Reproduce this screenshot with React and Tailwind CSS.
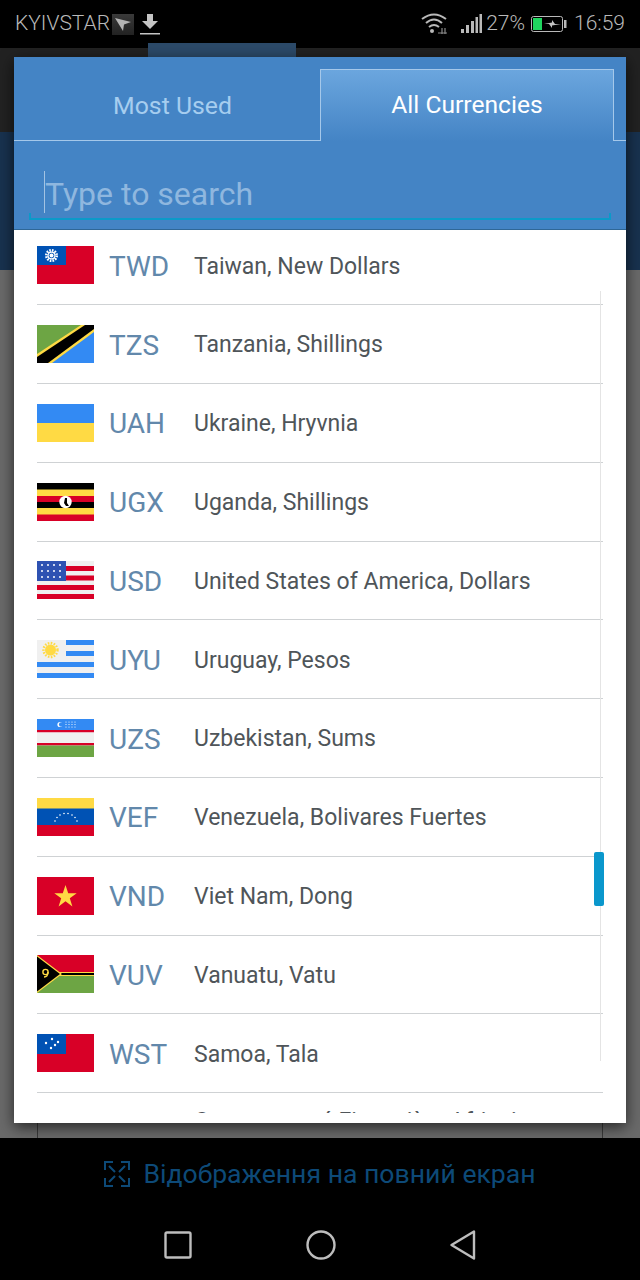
import React from 'react';

const RED = '#d80027';
const NAVY = '#0052b4';
const SKY = '#338af3';
const GOLD = '#ffda44';
const GREEN = '#6da544';
const PALE = '#f0f0f0';

const Stars = ({ points, r = 1, fill = '#fff' }) =>
  points.map(([x, y], i) => <circle key={i} cx={x} cy={y} r={r} fill={fill} />);

const flags = {
  TWD: (
    <>
      <rect width="57" height="38" fill={RED} />
      <rect width="29" height="19" fill={NAVY} />
      <circle cx="14.5" cy="9.5" r="5.2" fill="none" stroke="#fff" strokeWidth="2.6" strokeDasharray="1.6 1.1" />
      <circle cx="14.5" cy="9.5" r="4" fill="#fff" />
      <circle cx="14.5" cy="9.5" r="2.8" fill={NAVY} />
      <circle cx="14.5" cy="9.5" r="2" fill="#fff" />
    </>
  ),
  TZS: (
    <>
      <rect width="57" height="38" fill={SKY} />
      <polygon points="0,0 57,0 0,38" fill={GREEN} />
      <polygon points="44,0 57,0 57,7 15,38 0,38 0,29" fill={GOLD} />
      <polygon points="48,0 57,0 57,4 11,38 0,38 0,32" fill="#000" />
    </>
  ),
  UAH: (
    <>
      <rect width="57" height="19" fill={SKY} />
      <rect y="19" width="57" height="19" fill={GOLD} />
    </>
  ),
  UGX: (
    <>
      <rect width="57" height="38" fill={GOLD} />
      <rect width="57" height="6.5" fill="#000" />
      <rect y="13" width="57" height="6" fill={RED} />
      <rect y="19" width="57" height="6" fill="#000" />
      <rect y="31.5" width="57" height="6.5" fill={RED} />
      <circle cx="28.5" cy="19" r="6.2" fill="#fff" />
      <path d="M28 15 L30 15 L30 20 L32 23 L29 23 L27 20 Z" fill="#000" />
    </>
  ),
  USD: (
    <>
      <rect width="57" height="38" fill={PALE} />
      <rect y="5" width="57" height="5" fill={RED} />
      <rect y="14.5" width="57" height="5" fill={RED} />
      <rect y="24" width="57" height="5" fill={RED} />
      <rect y="33" width="57" height="5" fill={RED} />
      <rect width="29" height="20" fill="#2e52b2" />
      <Stars
        points={[4, 10, 16, 22].flatMap((x) => [
          [x + 1, 4],
          [x + 1, 10],
          [x + 1, 16],
        ])}
      />
    </>
  ),
  UYU: (
    <>
      <rect width="57" height="38" fill={PALE} />
      <rect x="29" width="28" height="5" fill={SKY} />
      <rect x="29" y="11" width="28" height="5" fill={SKY} />
      <rect y="22" width="57" height="5" fill={SKY} />
      <rect y="33" width="57" height="5" fill={SKY} />
      <circle cx="13.5" cy="10" r="5.5" fill={GOLD} />
      <circle cx="13.5" cy="10" r="7" fill="none" stroke={GOLD} strokeWidth="2.4" strokeDasharray="1.6 1.4" />
    </>
  ),
  UZS: (
    <>
      <rect width="57" height="12" fill={SKY} />
      <rect y="11" width="57" height="2.5" fill={RED} />
      <rect y="13.5" width="57" height="11" fill={PALE} />
      <rect y="24" width="57" height="2.5" fill={RED} />
      <rect y="26.5" width="57" height="11.5" fill={GREEN} />
      <circle cx="23" cy="5.5" r="2.6" fill="#fff" />
      <circle cx="24.2" cy="5.5" r="2.3" fill={SKY} />
      <Stars
        points={[29, 32, 35, 38].flatMap((x) => [
          [x, 3],
          [x, 5.5],
          [x, 8],
        ])}
        r={0.6}
      />
    </>
  ),
  VEF: (
    <>
      <rect width="57" height="11" fill={GOLD} />
      <rect y="10.5" width="57" height="17" fill={NAVY} />
      <rect y="27" width="57" height="11" fill={RED} />
      <Stars
        points={[
          [18, 23],
          [20, 19.5],
          [23, 17],
          [27, 15.5],
          [31, 15.5],
          [35, 17],
          [38, 19.5],
          [40, 23],
        ]}
        r={0.8}
      />
    </>
  ),
  VND: (
    <>
      <rect width="57" height="38" fill={RED} />
      <polygon
        points="28.5,8 31.2,16.2 39.7,16.2 32.8,21.2 35.4,29.4 28.5,24.3 21.6,29.4 24.2,21.2 17.3,16.2 25.8,16.2"
        fill={GOLD}
      />
    </>
  ),
  VUV: (
    <>
      <rect width="57" height="18" fill={RED} />
      <rect y="18" width="57" height="20" fill={GREEN} />
      <rect x="20" y="17" width="37" height="4" fill={GOLD} />
      <rect x="20" y="18" width="37" height="2" fill="#000" />
      <polygon points="0,0 25,19 0,38" fill={GOLD} />
      <polygon points="0,1.5 23,19 0,36.5" fill="#000" />
      <circle cx="8.5" cy="17" r="2.6" fill="none" stroke={GOLD} strokeWidth="1.4" />
      <path d="M11 17 Q11 22 7 22" fill="none" stroke={GOLD} strokeWidth="1.4" />
    </>
  ),
  WST: (
    <>
      <rect width="57" height="38" fill={RED} />
      <rect width="29" height="20" fill={NAVY} />
      <Stars
        points={[
          [15, 5],
          [9, 9],
          [21, 8],
          [18, 11],
          [14, 14],
        ]}
        r={1.2}
      />
    </>
  ),
  XAF: (
    <>
      <rect width="30" height="38" fill="#d6d9d4" />
      <rect x="30" width="27" height="38" fill="#f3ecc0" />
    </>
  ),
};

const currencies = [
  ['TWD', 'Taiwan, New Dollars'],
  ['TZS', 'Tanzania, Shillings'],
  ['UAH', 'Ukraine, Hryvnia'],
  ['UGX', 'Uganda, Shillings'],
  ['USD', 'United States of America, Dollars'],
  ['UYU', 'Uruguay, Pesos'],
  ['UZS', 'Uzbekistan, Sums'],
  ['VEF', 'Venezuela, Bolivares Fuertes'],
  ['VND', 'Viet Nam, Dong'],
  ['VUV', 'Vanuatu, Vatu'],
  ['WST', 'Samoa, Tala'],
];

const CurrencyRow = ({ code, name }) => (
  <div className="flex h-[78.8px] shrink-0 items-center border-b border-[#cfd2d4]">
    <svg width="57" height="38" viewBox="0 0 57 38" className="shrink-0">
      {flags[code]}
    </svg>
    <span className="ml-[15px] w-[85px] pt-[3px] text-[28px] text-[#6288ab]">{code}</span>
    <span className="pt-[3px] text-[23px] text-[#4f5559]">{name}</span>
  </div>
);

const StatusBar = () => (
  <div className="flex h-12 items-center justify-between bg-black px-[15px] text-[#b9b9b9]">
    <div className="flex items-center">
      <span className="text-[21px] font-light">KYIVSTAR</span>
      <div className="ml-[2px] flex h-[21px] w-[22px] items-center justify-center bg-gradient-to-b from-[#3a3a3a] to-[#222222]">
        <svg width="18" height="16" viewBox="0 0 18 16">
          <polygon points="1,2 17,6 10,8.5 9,15" fill="#b5b5b5" />
        </svg>
      </div>
      <svg width="20" height="22" viewBox="0 0 20 22" className="ml-[6px]">
        <path d="M7 1 H13 V8 H18 L10 16 L2 8 H7 Z M0 20 H20 V21.5 H0 Z" fill="#c4c4c4" />
      </svg>
    </div>
    <div className="flex items-center">
      <svg width="26" height="22" viewBox="0 0 26 22" className="-ml-[2px]">
        <path d="M1 6 Q13 -3 25 6 M5 10 Q13 3 21 10 M8 14 Q13 10 18 14" fill="none" stroke="#b9b9b9" strokeWidth="2" />
        <circle cx="11" cy="18" r="2" fill="#b9b9b9" />
        <path d="M17 20 H26 M21 15 V21 M24 15 V21" stroke="#8a8a8a" strokeWidth="1.2" />
      </svg>
      <svg width="21" height="20" viewBox="0 0 21 20" className="ml-[14px]">
        <rect x="0" y="15" width="3" height="4" fill="#b9b9b9" />
        <rect x="5" y="11" width="3" height="8" fill="#b9b9b9" />
        <rect x="10" y="7" width="3" height="12" fill="#b9b9b9" />
        <rect x="14.5" y="3" width="2.5" height="16" fill="#b9b9b9" />
        <rect x="18.5" y="0" width="2.5" height="19" fill="#b9b9b9" />
      </svg>
      <span className="ml-[4px] text-[21px] font-light">27%</span>
      <svg width="36" height="18" viewBox="0 0 36 18" className="ml-[6px]">
        <rect x="0.5" y="1.5" width="31" height="15" rx="2" fill="none" stroke="#b9b9b9" />
        <rect x="2" y="3" width="9" height="12" fill="#1fd65f" />
        <path d="M13 9 L21 7.5 L21 5 L24 9 L30 9 L21 10.5 L21 13 L18 9 Z" fill="#c4c4c4" />
        <rect x="33" y="5" width="2.5" height="8" fill="#b9b9b9" />
      </svg>
      <span className="ml-[7px] text-[21px] font-light">16:59</span>
    </div>
  </div>
);

const CurrencyModal = () => (
  <div className="absolute left-[14px] top-[57px] flex h-[1066px] w-[612px] flex-col bg-white shadow-[0_4px_14px_rgba(0,0,0,0.65)]">
    <div className="h-[173px] shrink-0 border-b border-[#2f6797] bg-[#4484c5]">
      <div className="flex h-[84px] pt-3">
        <div className="flex w-[306px] items-center justify-center border-b border-[#a5c8ea] pl-[11px] pt-[2px] text-[24.8px] text-[#a6cdef]">
          Most Used
        </div>
        <div className="flex w-[294px] items-center justify-center border-x border-t border-[#a5c8ea] bg-gradient-to-b from-[#6ba6de] to-[#4484c5] text-[24.6px] text-white">
          All Currencies
        </div>
        <div className="flex-1 border-b border-[#a5c8ea]" />
      </div>
      <div className="px-[15px] pt-[30px]">
        <div className="relative flex h-[49px] items-start border-b-2 border-[#0b9ac9] pl-[15px]">
          <div className="h-[42px] w-px bg-[#a3c3e3]" />
          <span className="text-[32px] leading-[46px] text-[#8fb7df]">Type to search</span>
          <div className="absolute -bottom-[2px] left-0 h-[7px] w-[2px] bg-[#0b9ac9]" />
          <div className="absolute -bottom-[2px] right-0 h-[7px] w-[2px] bg-[#0b9ac9]" />
        </div>
      </div>
    </div>
    <div className="relative flex-1 overflow-hidden">
      <div className="-mt-[3.6px] flex flex-col px-[23px]">
        {currencies.map(([code, name]) => (
          <CurrencyRow key={code} code={code} name={name} />
        ))}
        <div className="flex h-[78.8px] shrink-0 items-center">
          <svg width="57" height="38" viewBox="0 0 57 38" className="shrink-0">
            {flags.XAF}
          </svg>
          <span className="ml-[15px] w-[85px] pt-[3px] text-[28px] text-[#6288ab]">XAF</span>
          <span className="w-[400px] pt-[3px] text-[23px] leading-[24px] text-[#4f5559]">
            Communauté Financière Africaine (BEAC), CFA Franc BEAC
          </span>
        </div>
      </div>
      <div className="absolute inset-x-0 bottom-0 h-[10px] bg-white" />
      <div className="absolute left-[586px] top-[61px] h-[770px] w-px bg-[#e4e4e4]" />
      <div className="absolute left-[580px] top-[622px] h-[54px] w-[10px] rounded-[2px] bg-[#0a97cc]" />
    </div>
  </div>
);

const App = () => (
  <div className="relative flex h-[1280px] w-[640px] flex-col overflow-hidden bg-black font-['Roboto',sans-serif]">
    <StatusBar />
    <div className="h-[84px] bg-[#222222]" />
    <div className="h-[138px] bg-[#18324f]" />
    <div className="flex-1 bg-[#6a6a6a] px-[37px]">
      <div className="h-full border-x border-[#3a3a3a]" />
    </div>
    <div className="flex h-[142px] flex-col items-center bg-black">
      <div className="mt-6 flex h-[24px] items-center">
        <svg width="26" height="26" viewBox="0 0 26 26" className="mr-[13px]">
          <path
            d="M1 9 V1 H9 M17 1 H25 V9 M25 17 V25 H17 M9 25 H1 V17 M5 5 L11 11 M21 5 L15 11 M21 21 L15 15 M5 21 L11 15"
            fill="none"
            stroke="#0d4a78"
            strokeWidth="2"
          />
        </svg>
        <span className="text-[26.6px] text-[#0d4a78]">Відображення на повний екран</span>
      </div>
      <div className="mt-[44px] flex h-[30px] w-[312px] items-center justify-between">
        <svg width="28" height="28" viewBox="0 0 28 28">
          <rect x="1.5" y="1.5" width="25" height="25" rx="1.5" fill="none" stroke="#bdbdbd" strokeWidth="2.4" />
        </svg>
        <svg width="30" height="30" viewBox="0 0 30 30">
          <circle cx="15" cy="15" r="13.5" fill="none" stroke="#bdbdbd" strokeWidth="2.4" />
        </svg>
        <svg width="26" height="30" viewBox="0 0 26 30">
          <path d="M24 1.5 V28.5 L1.5 15 Z" fill="none" stroke="#bdbdbd" strokeWidth="2.4" strokeLinejoin="round" />
        </svg>
      </div>
    </div>
    <div className="absolute left-[148px] top-[43px] h-[14px] w-[148px] bg-[#2c4a69]" />
    <CurrencyModal />
  </div>
);

export default App;
